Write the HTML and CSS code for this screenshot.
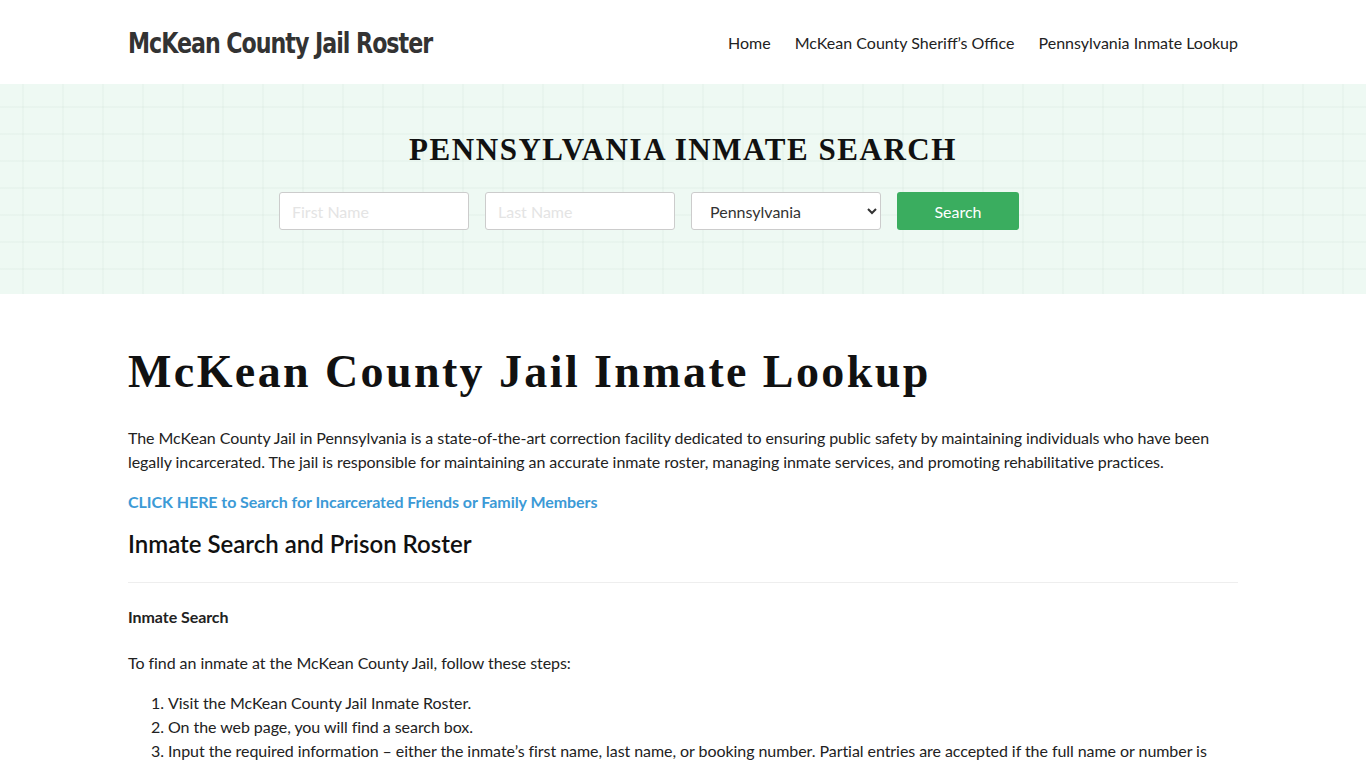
FILE: index.html
```html
<!DOCTYPE html>
<html lang="en">
<head>
<meta charset="utf-8">
<title>McKean County Jail Roster</title>
<link rel="stylesheet" href="styles.css">
</head>
<body>
<header class="site-header">
  <div class="container header-row">
    <a class="logo" href="#">McKean County Jail Roster</a>
    <nav class="nav">
      <a href="#">Home</a>
      <a href="#">McKean County Sheriff’s Office</a>
      <a href="#">Pennsylvania Inmate Lookup</a>
    </nav>
  </div>
</header>
<section class="hero">
  <h2 class="hero-title">PENNSYLVANIA INMATE SEARCH</h2>
  <form class="search-form">
    <input class="field" type="text" placeholder="First Name">
    <input class="field" type="text" placeholder="Last Name">
    <select class="field select">
      <option>Pennsylvania</option>
    </select>
    <button class="btn" type="button">Search</button>
  </form>
</section>
<main class="container content">
  <h1 class="page-title">McKean County Jail Inmate Lookup</h1>
  <p>The McKean County Jail in Pennsylvania is a state-of-the-art correction facility dedicated to ensuring public safety by maintaining individuals who have been legally incarcerated. The jail is responsible for maintaining an accurate inmate roster, managing inmate services, and promoting rehabilitative practices.</p>
  <p><a class="cta" href="#">CLICK HERE to Search for Incarcerated Friends or Family Members</a></p>
  <h2 class="section-title">Inmate Search and Prison Roster</h2>
  <hr class="rule">
  <p class="strong">Inmate Search</p>
  <p>To find an inmate at the McKean County Jail, follow these steps:</p>
  <ol class="steps">
    <li>Visit the McKean County Jail Inmate Roster.</li>
    <li>On the web page, you will find a search box.</li>
    <li>Input the required information – either the inmate’s first name, last name, or booking number. Partial entries are accepted if the full name or number is unknown.</li>
  </ol>
</main>
</body>
</html>
```
FILE: styles.css
```css
* { box-sizing: border-box; }
html, body { margin: 0; padding: 0; }
body {
  font-family: Lato, "Open Sans", sans-serif;
  font-size: 16px;
  line-height: 24px;
  color: #222;
  background: #fff;
}
.container {
  width: 1110px;
  margin: 0 auto;
}
.site-header { height: 84px; background: #fff; }
.header-row {
  height: 84px;
  display: flex;
  align-items: center;
  justify-content: space-between;
  padding-top: 2px;
}
.logo {
  display: inline-block;
  font-family: "DejaVu Sans", sans-serif;
  font-stretch: condensed;
  font-weight: bold;
  font-size: 29px;
  color: #333;
  text-decoration: none;
  letter-spacing: -1.2px;
  transform: scaleX(0.85);
  transform-origin: left center;
}
.nav { display: flex; gap: 24px; }
.nav a {
  font-size: 16px;
  color: #222;
  text-decoration: none;
}
.hero {
  height: 210px;
  background-color: #eef9f3;
  background-image:
    repeating-linear-gradient(90deg, transparent 0 22px, rgba(0,60,30,0.022) 22px 24px, transparent 24px 40px),
    repeating-linear-gradient(0deg, transparent 0 24px, rgba(0,60,30,0.022) 24px 26px, transparent 26px 27px);
  padding-top: 48px;
}
.hero-title {
  margin: 0;
  text-align: center;
  font-family: "Liberation Serif", "Times New Roman", serif;
  font-weight: bold;
  font-size: 31px;
  line-height: 36px;
  letter-spacing: 1.55px;
  color: #111;
}
.search-form {
  width: 808px;
  margin: 24px auto 0;
  display: flex;
  gap: 16px;
}
.field {
  width: 190px;
  height: 38px;
  border: 1px solid #ccc;
  border-radius: 3px;
  background: #fff;
  font-family: Lato, sans-serif;
  font-size: 16px;
  padding: 0 12px;
  color: #333;
}
.field::placeholder { color: #e4e4e4; }
.select { padding: 0 10px 0 14px; }
.btn {
  width: 122px;
  height: 38px;
  border: 0;
  border-radius: 3px;
  background: #3aad5f;
  color: #fff;
  font-family: Lato, sans-serif;
  font-size: 16px;
}
.content { padding-top: 50px; }
.page-title {
  margin: 0 0 26px;
  font-family: "Liberation Serif", "Times New Roman", serif;
  font-weight: bold;
  font-size: 46px;
  line-height: 56px;
  letter-spacing: 2.4px;
  color: #111;
}
p, li { letter-spacing: -0.06px; }
p { margin: 0 0 16px; }
.cta {
  color: #3c9ad6;
  font-weight: bold;
  text-decoration: none;
}
.section-title {
  margin: 0;
  font-family: Lato, sans-serif;
  font-weight: 600;
  font-size: 24px;
  line-height: 28px;
  color: #111;
}
.rule {
  border: 0;
  border-top: 1px solid #eee;
  margin: 24px 0 22px;
}
.strong { font-weight: bold; margin-bottom: 22px; }
.steps { margin: 0; padding-left: 40px; }
```
